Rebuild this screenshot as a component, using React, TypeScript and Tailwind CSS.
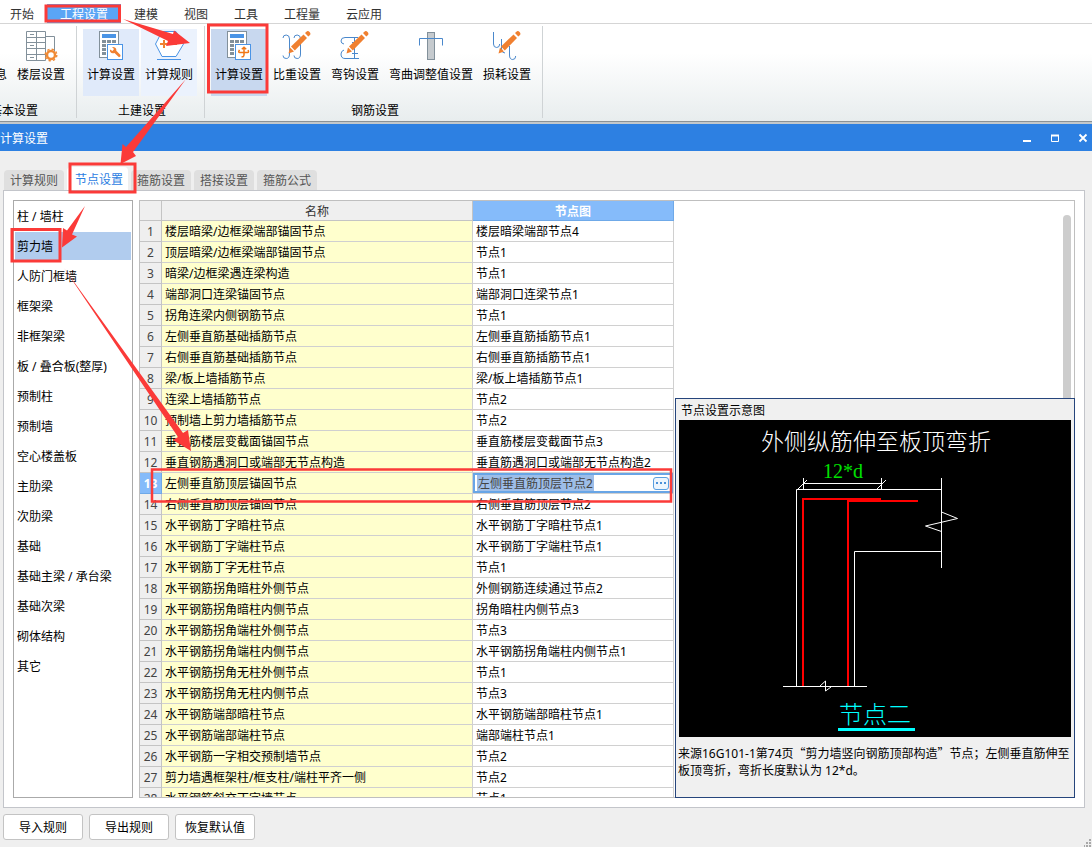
import { ReactNode, useState } from "react";
import clsx from "clsx";

const menus = ["开始", "工程设置", "建模", "视图", "工具", "工程量", "云应用"];

const tabs = ["计算规则", "节点设置", "箍筋设置", "搭接设置", "箍筋公式"];

const components = [
  "柱 / 墙柱",
  "剪力墙",
  "人防门框墙",
  "框架梁",
  "非框架梁",
  "板 / 叠合板(整厚)",
  "预制柱",
  "预制墙",
  "空心楼盖板",
  "主肋梁",
  "次肋梁",
  "基础",
  "基础主梁 / 承台梁",
  "基础次梁",
  "砌体结构",
  "其它",
];

const nodes: [string, string][] = [
  ["楼层暗梁/边框梁端部锚固节点", "楼层暗梁端部节点4"],
  ["顶层暗梁/边框梁端部锚固节点", "节点1"],
  ["暗梁/边框梁遇连梁构造", "节点1"],
  ["端部洞口连梁锚固节点", "端部洞口连梁节点1"],
  ["拐角连梁内侧钢筋节点", "节点1"],
  ["左侧垂直筋基础插筋节点", "左侧垂直筋插筋节点1"],
  ["右侧垂直筋基础插筋节点", "右侧垂直筋插筋节点1"],
  ["梁/板上墙插筋节点", "梁/板上墙插筋节点1"],
  ["连梁上墙插筋节点", "节点2"],
  ["预制墙上剪力墙插筋节点", "节点2"],
  ["垂直筋楼层变截面锚固节点", "垂直筋楼层变截面节点3"],
  ["垂直钢筋遇洞口或端部无节点构造", "垂直筋遇洞口或端部无节点构造2"],
  ["左侧垂直筋顶层锚固节点", "左侧垂直筋顶层节点2"],
  ["右侧垂直筋顶层锚固节点", "右侧垂直筋顶层节点2"],
  ["水平钢筋丁字暗柱节点", "水平钢筋丁字暗柱节点1"],
  ["水平钢筋丁字端柱节点", "水平钢筋丁字端柱节点1"],
  ["水平钢筋丁字无柱节点", "节点1"],
  ["水平钢筋拐角暗柱外侧节点", "外侧钢筋连续通过节点2"],
  ["水平钢筋拐角暗柱内侧节点", "拐角暗柱内侧节点3"],
  ["水平钢筋拐角端柱外侧节点", "节点3"],
  ["水平钢筋拐角端柱内侧节点", "水平钢筋拐角端柱内侧节点1"],
  ["水平钢筋拐角无柱外侧节点", "节点1"],
  ["水平钢筋拐角无柱内侧节点", "节点3"],
  ["水平钢筋端部暗柱节点", "水平钢筋端部暗柱节点1"],
  ["水平钢筋端部端柱节点", "端部端柱节点1"],
  ["水平钢筋一字相交预制墙节点", "节点2"],
  ["剪力墙遇框架柱/框支柱/端柱平齐一侧", "节点2"],
  ["水平钢筋斜交丁字墙节点", "节点1"],
];

const Icon = ({ children }: { children?: ReactNode }) => (
  <svg
    width="36"
    height="32"
    viewBox="0 0 36 32"
    fill="none"
    className="mt-px"
    aria-hidden="true"
  >
    {children}
  </svg>
);

const Pencil = () => (
  <g fill="#f08030">
    <path d="M9.5 23.5 11 17.5 15 21.5Z" />
    <path d="M12 16.5 24.5 4.5 28 8 15.8 20.5Z" />
    <path d="M26 3 28 1.2Q29.5 .8 31 2.5 32 4 31 5L29.3 6.6Z" />
  </g>
);

const Calculator = ({ children }: { children: ReactNode }) => (
  <Icon>
    <rect x="6.5" y="1.5" width="19" height="26" fill="#fff" stroke="#82909a" />
    <rect x="9" y="4" width="14" height="4" fill="#4a94e6" />
    <path
      d="M9 10h4v3H9zM14 10h4v3h-4zM19 10h4v3h-4zM9 14h4v3H9zM9 18h4v3H9zM9 22h4v3H9z"
      fill="#82909a"
    />
    <rect x="14.5" y="14.5" width="15" height="15" fill="#fff" stroke="#4a94e6" />
    {children}
  </Icon>
);

const FloorIcon = () => (
  <Icon>
    <path
      d="M3.5 1.5h19v29h-19zM3.5 7.5h19M3.5 12.5h19M3.5 18.5h19M3.5 24.5h19M13.5 1.5v29M22.5 6.5h9v15"
      stroke="#82909a"
      fill="#fff"
    />
    <path d="M7 4.5h4M7 15.5h4M7 27.5h4" stroke="#82909a" />
    <circle cx="28" cy="25" r="4" stroke="#f08a35" strokeWidth="2.5" fill="#fff" />
    <circle cx="28" cy="25" r="5.8" stroke="#f08a35" strokeWidth="1.4" strokeDasharray="2.3 2.25" />
  </Icon>
);

const WrenchIcon = () => (
  <Calculator>
    <path
      d="M17 19.5 19.5 21 21 19 19 17Q22 16.5 23 18.5 23.5 20 23.3 20.8L27.5 25Q28 27 26 27.2L21.5 23Q18.5 23.8 17.4 22 16.8 21 17 19.5Z"
      fill="#f08030"
    />
  </Calculator>
);

const RebarCalcIcon = () => (
  <Calculator>
    <path
      d="M23 17.5v7.5q-.3 2.200-2.500 1.800M20.800 19.300l2.200-2 2.200 2M18.500 19.800q-1.800 2.700.5 2.700h7.500q1.800 0 .5-2.500"
      stroke="#f07818"
      strokeWidth="1.5"
    />
  </Calculator>
);

const RuleIcon = () => (
  <Icon>
    <path d="M11 1.5H25L32.5 14 25 26.5H11L4.5 14Z" fill="#fff" stroke="#4a94e6" />
    <path d="M6 29.5h24" stroke="#4a94e6" />
    <path d="M9 14h8M13 10v8M20 14h6" stroke="#f08030" strokeWidth="2" />
  </Icon>
);

const WeightIcon = () => (
  <Icon>
    <path
      d="M4 8q0-3 3.2-3 3.3 0 3.3 4v15q0 4.500-3.300 4.500Q4 28.500 4 25.500M15 8q0-3 3.200-3 3.300 0 3.300 4v15q0 4.500-3.300 4.500-3.200 0-3.200-3"
      stroke="#4a88cc"
    />
    <Pencil />
  </Icon>
);

const HookIcon = () => (
  <Icon>
    <path
      d="M7 14q-3-.5-3-3 0-3.500 4-3.500h13M7 20q-3 1-3 4 0 4.500 4 4.500h14M17.500 7.500v21M15 12.500h6M15 23.500h6"
      stroke="#4a88cc"
    />
    <Pencil />
  </Icon>
);

const BendIcon = () => (
  <Icon>
    <rect x="14.5" y="2.5" width="7" height="27" fill="#c5cace" stroke="#82909a" />
    <path d="M6.5 15.5v-7h23v7" stroke="#4a88cc" />
  </Icon>
);

const LossIcon = () => (
  <Icon>
    <path
      d="M4.5 2v12q0 3.500 3.200 3.500 3 0 3-3.500M12.500 9v10q0 4 3.500 4M20.500 16v9q0 4.500 3.200 4.500 3 0 3-3.500"
      stroke="#4a88cc"
    />
    <Pencil />
  </Icon>
);

interface Tool {
  label: string;
  icon: ReactNode;
  className?: string;
}

const groups: { title: string; tools: Tool[]; clipped?: boolean }[] = [
  {
    title: "基本设置",
    clipped: true,
    tools: [
      { label: "工程信息", icon: <Icon /> },
      { label: "楼层设置", icon: <FloorIcon /> },
    ],
  },
  {
    title: "土建设置",
    tools: [
      { label: "计算设置", icon: <WrenchIcon />, className: "bg-[#e0eafa]" },
      { label: "计算规则", icon: <RuleIcon />, className: "bg-[#ebf2fd]" },
    ],
  },
  {
    title: "钢筋设置",
    tools: [
      { label: "计算设置", icon: <RebarCalcIcon />, className: "bg-[#c8d8ef]" },
      { label: "比重设置", icon: <WeightIcon /> },
      { label: "弯钩设置", icon: <HookIcon /> },
      { label: "弯曲调整值设置", icon: <BendIcon /> },
      { label: "损耗设置", icon: <LossIcon /> },
    ],
  },
];

const Ribbon = () => (
  <header>
    <nav className="flex h-6 gap-[26px] border-b border-[#d5d5d5] bg-white pl-[10px] pt-1 text-[#333]">
      {menus.map((menu) => (
        <button
          key={menu}
          className={clsx("pt-0.5 leading-[18px]", {
            "-mx-[13px] bg-[#5aa5f5] px-[13px] text-white": menu === "工程设置",
          })}
        >
          {menu}
        </button>
      ))}
    </nav>
    <div className="flex h-[97px] bg-linear-to-b from-white from-30% to-[#e8edee] pb-[3px] pt-[2px]">
      {groups.map((group) => (
        <section
          key={group.title}
          className={clsx("flex border-r border-[#cfd3d5]", {
            "w-[77px] justify-end overflow-hidden": group.clipped,
          })}
        >
          <div className="flex shrink-0 flex-col pl-1.5 pr-[7px] pt-[3px]">
            <div className="flex gap-0.5">
              {group.tools.map((tool) => (
                <button
                  key={tool.label}
                  className={clsx(
                    "flex h-[67px] flex-col items-center whitespace-nowrap px-1",
                    tool.className
                  )}
                >
                  {tool.icon}
                  <span className="mt-[3px] leading-5">{tool.label}</span>
                </button>
              ))}
            </div>
            <h2 className="mt-[5px] pl-1 text-center leading-5">{group.title}</h2>
          </div>
        </section>
      ))}
    </div>
    <div className="h-[3px] border-t border-[#8b9296] bg-[#c3c8cb]" />
  </header>
);

const TitleBar = () => (
  <div className="flex h-[27px] items-center justify-between bg-[#2d80e2] pr-[3px] text-white">
    <h1 className="pt-0.5">计算设置</h1>
    <div className="flex gap-4">
      <button aria-label="最小化">
        <svg width="12" height="12" fill="none" stroke="#fff" strokeWidth="2">
          <path d="M2 9h8" />
        </svg>
      </button>
      <button aria-label="最大化">
        <svg width="12" height="12" fill="none" stroke="#fff">
          <path d="M2.5 3v6.5h7V3" />
          <path d="M2 3.500h8" strokeWidth="2" />
        </svg>
      </button>
      <button aria-label="关闭">
        <svg width="12" height="12" fill="none" stroke="#fff" strokeWidth="1.800">
          <path d="M2.500 2.500l7 7M9.500 2.500l-7 7" />
        </svg>
      </button>
    </div>
  </div>
);

const NodeDiagram = () => (
  <svg width="392" height="317" viewBox="679 420 392 317" className="block bg-black" fill="none">
    <text
      x="761"
      y="450"
      fontSize="23"
      fill="#fff"
      className="font-['Noto_Sans_CJK_SC',sans-serif] font-light"
    >
      外侧纵筋伸至板顶弯折
    </text>
    <text x="823" y="478" fontSize="20" fill="#00e000" className="font-['Liberation_Serif',serif]">
      12*d
    </text>
    <g stroke="#fff">
      <path d="M796.5 686V489.5H941.5M803.5 478v11M881.5 478v11M803 483.5h79" />
      <path d="M798 489l9-9M877 489l9-9" />
      <path d="M941.5 478v34l16 6.5-32 7.5 16 5.5V568M941.5 512v20" />
      <path d="M941 551.5H854.5V686M783 686.5h84" />
      <path d="M820 686l5.5-5v10l5.5-4" />
    </g>
    <g stroke="#f00" strokeWidth="2">
      <path d="M803 686V499h78M848 686V501h70" />
      <path d="M848 500h33" />
    </g>
    <text
      x="839"
      y="723"
      fontSize="24"
      fill="#0ff"
      className="font-['Noto_Sans_CJK_SC',sans-serif] font-light"
    >
      节点二
    </text>
    <path d="M838 729.5h77" stroke="#0ff" strokeWidth="3" />
  </svg>
);

const NodePreview = () => (
  <aside className="absolute -bottom-px -right-px h-[400px] w-[400px] border border-[#26457c] bg-[#f0f0f0]">
    <h3 className="h-[21px] pl-[5px] leading-6">节点设置示意图</h3>
    <div className="px-[3px]">
      <NodeDiagram />
    </div>
    <p className="whitespace-nowrap pl-0.5 pt-[7px] leading-[17px]">
      来源16G101-1第74页
      <span className="font-['Noto_Sans_CJK_SC',sans-serif]">“剪力墙竖向钢筋顶部构造”</span>
      节点；左侧垂直筋伸至
      <br />
      板顶弯折，弯折长度默认为 12*d。
    </p>
  </aside>
);

const NodeTable = ({ selected }: { selected: number }) => {
  const [value, setValue] = useState(nodes[selected][1]);

  return (
    <table className="w-[534px] table-fixed border-separate border-spacing-0">
      <colgroup>
        <col className="w-[22px]" />
        <col className="w-[311px]" />
        <col className="w-[201px]" />
      </colgroup>
      <thead>
        <tr className="h-5 bg-[#efefef] leading-[17px] text-[#333]">
          <th className="border-b border-r border-[#c4c4c4] p-0" />
          <th className="border-b border-r border-[#c4c4c4] p-0 pt-0.5 font-normal">名称</th>
          <th className="border-b border-r border-[#6fa9e8] bg-[#85bbfa] p-0 pt-0.5 text-white">
            节点图
          </th>
        </tr>
      </thead>
      <tbody>
        {nodes.map(([name, node], i) => (
          <tr key={name} className="h-[21px] whitespace-nowrap leading-[18px]">
            <th
              className={clsx(
                "border-b border-r p-0 pt-0.5",
                i === selected
                  ? "border-[#6fa9e8] bg-[#85bbfa] text-white"
                  : "border-[#c4c4c4] bg-[#efefef] font-normal text-[#444]"
              )}
            >
              {i + 1}
            </th>
            <td className="border-b border-r border-[#d0d0d0] bg-[#ffffcd] p-0 pl-[3px] pt-0.5">
              {name}
            </td>
            <td
              className={clsx("border-b border-r border-[#d0d0d0] bg-white p-0", {
                "pl-[3px] pt-0.5": i !== selected,
              })}
            >
              {i === selected ? (
                <div className="flex h-5 items-center justify-between border-2 border-[#68a5e6] px-0.5">
                  <input
                    aria-label={name}
                    value={value}
                    onChange={(e) => setValue(e.target.value)}
                    className="h-4 w-[117px] bg-[#9dbde8] pl-px pt-0.5 text-[#444] outline-none"
                  />
                  <button
                    aria-label="选择节点图"
                    className="flex h-[13px] w-4 items-center justify-center gap-0.5 rounded-[3px] border border-[#5a9fe0] bg-[#edf5fd]"
                  >
                    <i className="size-0.5 bg-[#4a90d9]" />
                    <i className="size-0.5 bg-[#4a90d9]" />
                    <i className="size-0.5 bg-[#4a90d9]" />
                  </button>
                </div>
              ) : (
                node
              )}
            </td>
          </tr>
        ))}
      </tbody>
    </table>
  );
};

// red boxes and arrows showing the click order
const Guide = () => (
  <svg
    width="1092"
    height="847"
    className="pointer-events-none absolute left-0 top-0"
    fill="none"
    aria-hidden="true"
  >
    <g stroke="#fb3a38" strokeWidth="3">
      <rect x="46" y="6" width="73.5" height="15" />
      <rect x="208.5" y="25" width="58.5" height="67" />
      <rect x="70" y="164" width="65" height="28" />
      <rect x="12" y="229.5" width="48" height="31.5" />
      <rect x="152" y="469.5" width="519" height="32" strokeWidth="2.5" />
    </g>
    <g fill="#fb3a38">
      <path d="M123 19 173 34 174 30.5 190 43 166 46 168 41Z" />
      <path d="M186 79 133 152 136 156 120.5 164 122.5 144 126 147Z" />
      <path d="M85 206 72 234.5 77 236.5 62 247.5 63 228 67 230.5Z" />
      <path d="M64 268 183 433 188 430 191 451 173 440 178 437Z" />
    </g>
  </svg>
);

const App = () => {
  const [tab, setTab] = useState("节点设置");
  const [component, setComponent] = useState("剪力墙");

  return (
    <div className="relative flex h-screen flex-col overflow-hidden bg-[#efefef] font-['Noto_Sans','Noto_Sans_CJK_SC',sans-serif] text-xs text-black">
      <Ribbon />
      <TitleBar />
      <main className="flex min-h-0 flex-1 flex-col pb-[7px] pl-[3px] pr-[7px] pt-4">
        <div className="flex h-[23px] items-end gap-[3px] pl-px">
          {tabs.map((name) => (
            <button
              key={name}
              onClick={() => setTab(name)}
              className={clsx(
                "rounded-t pt-0.5 leading-[18px]",
                name === tab
                  ? "h-[23px] bg-white pl-2 pr-[5px] text-[#2d80e2]"
                  : "h-5 bg-[#dfdfdf] px-1.5 text-[#555]"
              )}
            >
              {name}
            </button>
          ))}
        </div>
        <div className="flex min-h-0 flex-1 gap-[6px] border border-[#c3c5ca] bg-white p-[9px]">
          <ul className="w-[120px] shrink-0 border border-[#aaa] p-px">
            {components.map((name) => (
              <li key={name} className="h-[30px]">
                <button
                  onClick={() => setComponent(name)}
                  className={clsx("h-7 w-full whitespace-nowrap pl-0.5 pt-0.5 text-left", {
                    "bg-[#b1ccee]": name === component,
                  })}
                >
                  {name}
                </button>
              </li>
            ))}
          </ul>
          <div className="relative flex-1 border border-[#bfbfbf]">
            <div className="h-full overflow-hidden">
              <NodeTable selected={12} />
            </div>
            <div className="absolute right-[3px] top-[14px] h-[300px] w-2 rounded-full bg-[#cdcdcd]" />
            <NodePreview />
          </div>
        </div>
        <div className="mt-[6px] flex gap-[6px]">
          {["导入规则", "导出规则", "恢复默认值"].map((label) => (
            <button
              key={label}
              className="h-[26px] w-20 rounded-[3px] border border-[#c3c3c3] bg-white pt-0.5"
            >
              {label}
            </button>
          ))}
        </div>
      </main>
      <svg width="8" height="8" className="absolute bottom-0 right-0" fill="#a8a8a8" aria-hidden="true">
        <path d="M5 0h2v2H5zM2 3h2v2H2zM5 3h2v2H5zM0 6h1v2H0zM2 6h2v2H2zM5 6h2v2H5z" />
      </svg>
      <Guide />
    </div>
  );
};

export default App;
